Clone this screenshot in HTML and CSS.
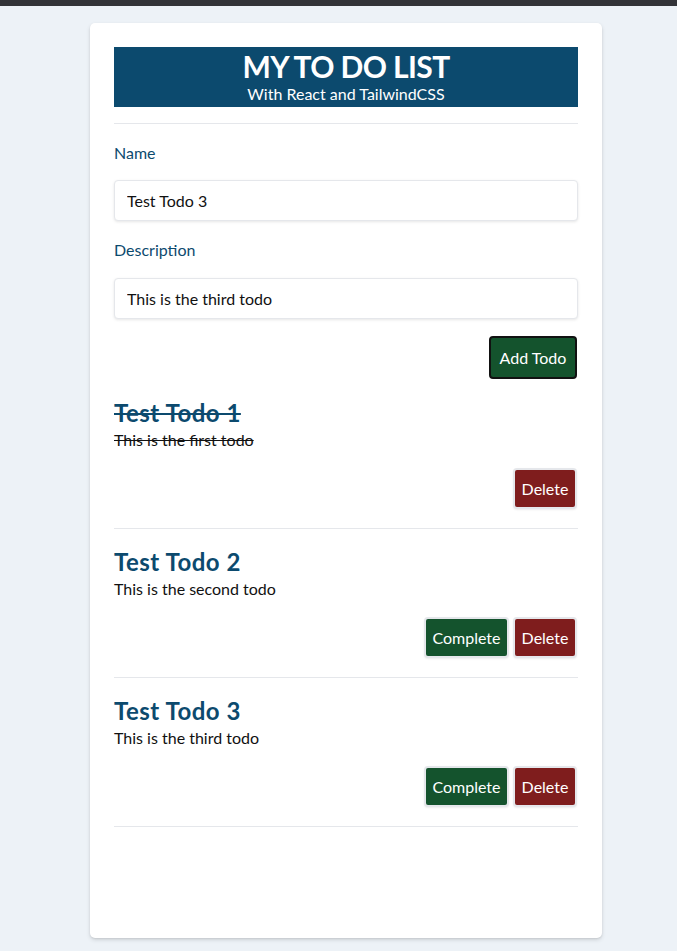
FILE: index.html
```html
<!DOCTYPE html>
<html lang="en">
<head>
<meta charset="utf-8">
<title>My To Do List</title>
<link rel="stylesheet" href="styles.css">
</head>
<body>
<div class="topbar"></div>
<div class="page">
  <main class="card">
    <header class="banner">
      <h1 class="banner-title">MY TO DO LIST</h1>
      <p class="banner-sub">With React and TailwindCSS</p>
    </header>
    <hr class="rule rule-head">
    <form class="form">
      <label class="label" for="name">Name</label>
      <input class="input" id="name" type="text" value="Test Todo 3">
      <label class="label label-second" for="desc">Description</label>
      <input class="input input-second" id="desc" type="text" value="This is the third todo">
      <div class="form-actions">
        <button class="btn btn-add" type="button">Add Todo</button>
      </div>
    </form>
    <ul class="todos">
      <li class="todo done">
        <h2 class="todo-title">Test Todo 1</h2>
        <p class="todo-desc">This is the first todo</p>
        <div class="todo-actions">
          <button class="btn btn-delete" type="button">Delete</button>
        </div>
        <hr class="rule">
      </li>
      <li class="todo">
        <h2 class="todo-title">Test Todo 2</h2>
        <p class="todo-desc">This is the second todo</p>
        <div class="todo-actions">
          <button class="btn btn-complete" type="button">Complete</button>
          <button class="btn btn-delete" type="button">Delete</button>
        </div>
        <hr class="rule">
      </li>
      <li class="todo">
        <h2 class="todo-title">Test Todo 3</h2>
        <p class="todo-desc">This is the third todo</p>
        <div class="todo-actions">
          <button class="btn btn-complete" type="button">Complete</button>
          <button class="btn btn-delete" type="button">Delete</button>
        </div>
        <hr class="rule">
      </li>
    </ul>
  </main>
</div>
</body>
</html>
```
FILE: styles.css
```css
* { box-sizing: border-box; }
html, body { margin: 0; padding: 0; }
body {
  background: #edf2f7;
  font-family: "Lato", "Open Sans", sans-serif;
  font-size: 16px;
  color: #111;
  min-height: 951px;
}
.topbar { height: 6px; background: #333438; }
.page {
  display: flex;
  justify-content: center;
  padding: 17px 0 0 15px;
}
.card {
  width: 512px;
  min-height: 915px;
  background: #fff;
  border-radius: 5px;
  box-shadow: 0 2px 4px rgba(0,0,0,0.12), 0 1px 2px rgba(0,0,0,0.08);
  padding: 24px;
}
.banner {
  background: #0c4a6e;
  color: #fff;
  text-align: center;
  height: 60px;
  padding-top: 3px;
}
.banner-title {
  margin: 0;
  font-size: 30px;
  font-weight: 700;
  line-height: 33px;
  letter-spacing: -0.6px;
}
.banner-sub {
  margin: 0;
  font-size: 16px;
  line-height: 21px;
}
.rule {
  border: 0;
  border-top: 1px solid #e5e7eb;
  margin: 0;
}
.rule-head { margin-top: 16px; }
.form { display: flex; flex-direction: column; }
.label {
  color: #0c4a6e;
  line-height: 24px;
  margin-top: 17px;
  margin-bottom: 15px;
}
.label-second { margin-bottom: 16px; }
.input {
  height: 41px;
  border: 1px solid #e5e7eb;
  border-radius: 4px;
  box-shadow: 0 1px 3px rgba(0,0,0,0.1);
  padding: 0 12px;
  font: inherit;
  color: #111;
  outline: none;
}
.form-actions {
  display: flex;
  justify-content: flex-end;
  margin-top: 17px;
  padding-right: 1px;
}
.btn {
  font: inherit;
  color: #fff;
  border-radius: 4px;
  cursor: pointer;
  line-height: 24px;
}
.btn-add {
  height: 43px;
  width: 88px;
  background: #14532d;
  border: 2px solid #111;
  padding: 0;
}
.btn-complete, .btn-delete {
  height: 41px;
  border: 2px solid #e5e7eb;
  padding: 0;
  box-shadow: 0 1px 2px rgba(0,0,0,0.08);
}
.btn-complete { background: #14532d; width: 85px; }
.btn-delete { background: #7f1d1d; width: 64px; }
.todos { list-style: none; margin: 0; padding: 0; }
.todo { padding-top: 17px; }
.todo:first-child { padding-top: 18px; }
.todo-title {
  margin: 0;
  color: #0c4a6e;
  font-size: 24px;
  font-weight: 700;
  line-height: 31px;
  letter-spacing: 0.5px;
}
.todo-desc {
  margin: 0;
  line-height: 24px;
}
.done .todo-title, .done .todo-desc { text-decoration: line-through; }
.todo-actions {
  display: flex;
  justify-content: flex-end;
  gap: 4px;
  margin-top: 16px;
  margin-bottom: 19px;
  padding-right: 1px;
}
```
